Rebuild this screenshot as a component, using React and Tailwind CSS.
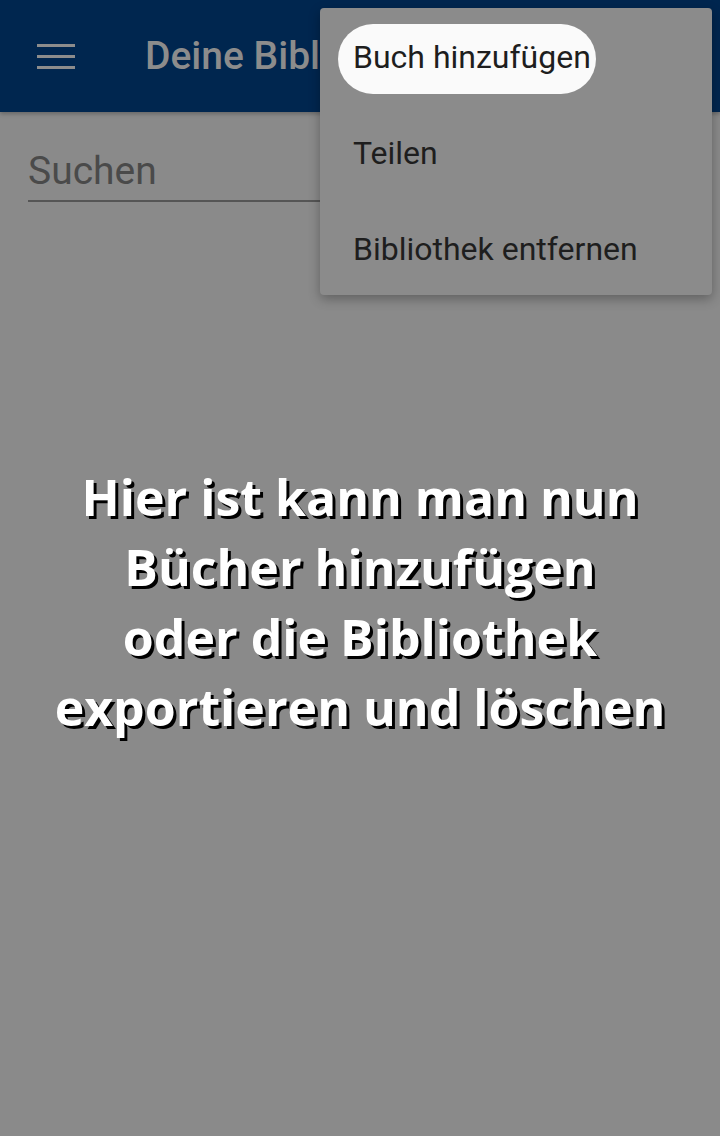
import { useState } from 'react'

const MENU_ITEMS = ['Buch hinzufügen', 'Teilen', 'Bibliothek entfernen']

export default function App() {
  const [active] = useState(0)

  return (
    <div className="relative w-[720px] h-[1136px] overflow-hidden bg-[#8a8a8a] font-['Roboto',sans-serif]">
      {/* App bar */}
      <div className="h-[112px] bg-[#00264f] flex items-center shadow-[0_2px_4px_rgba(0,0,0,0.25)]">
        <div className="w-[38px] ml-[37px] flex flex-col gap-[8px]">
          <span className="h-[3px] bg-[#8c8c8c]" />
          <span className="h-[3px] bg-[#8c8c8c]" />
          <span className="h-[3px] bg-[#8c8c8c]" />
        </div>
        <h1 className="ml-[70px] text-[39px] font-medium text-[#8c8c8c] whitespace-nowrap">
          Deine Bibliothek
        </h1>
      </div>

      {/* Search */}
      <div className="mx-[28px] mt-[36px] border-b-2 border-[#555555] pb-[6px]">
        <span className="block text-[39px] leading-[46px] text-[#4a4a4a]">Suchen</span>
      </div>

      {/* Hint */}
      <div className="mt-[260px] text-center text-white font-bold text-[50px] leading-[70px] font-['Open_Sans',sans-serif] [text-shadow:3px_3px_0_#000]">
        <p>Hier ist kann man nun</p>
        <p>Bücher hinzufügen</p>
        <p>oder die Bibliothek </p>
        <p>exportieren und löschen</p>
      </div>

      {/* Overflow menu */}
      <div className="absolute left-[320px] top-[8px] w-[392px] h-[287px] rounded-[4px] bg-[#8b8b8b] shadow-[0_4px_12px_rgba(0,0,0,0.3)] pt-[1px]">
        {MENU_ITEMS.map((item, i) => (
          <div key={item} className="h-[96px] flex items-center px-[18px]">
            <span
              className={`text-[32px] text-[#1e1e1e] whitespace-nowrap ${
                i === active
                  ? 'bg-[#fafafa] rounded-full h-[70px] mt-[4px] pb-[4px] flex items-center pl-[15px] pr-[5px]'
                  : 'pl-[15px]'
              }`}
            >
              {item}
            </span>
          </div>
        ))}
      </div>
    </div>
  )
}
